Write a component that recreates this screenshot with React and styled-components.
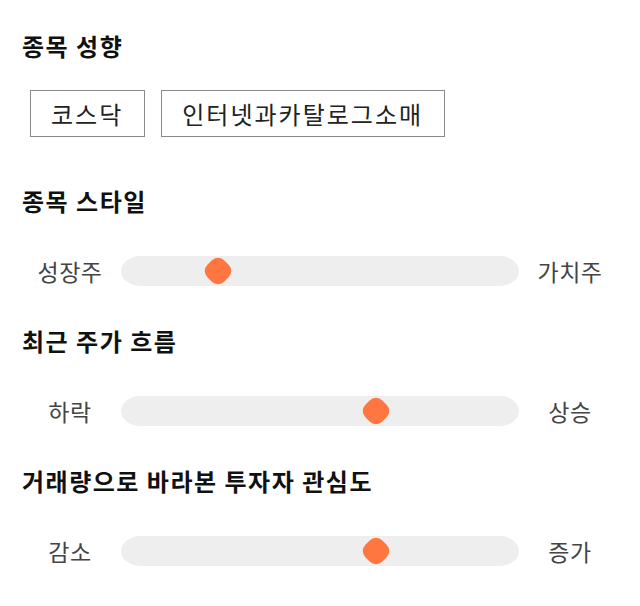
import React from 'react';
import styled, { createGlobalStyle } from 'styled-components';

const GlobalStyle = createGlobalStyle`
  body {
    margin: 0;
    background: #ffffff;
    font-family: "Noto Sans CJK KR", "Noto Sans", sans-serif;
  }
`;

const Page = styled.div`
  width: 640px;
  padding: 30px 22px 0;
  box-sizing: border-box;
  display: flex;
  flex-direction: column;
`;

const Section = styled.section`
  display: flex;
  flex-direction: column;
  gap: ${(p) => p.$gap}px;
  margin-bottom: ${(p) => p.$after}px;
`;

const Heading = styled.h2`
  margin: 0;
  font-size: 24px;
  letter-spacing: 1.5px;
  line-height: 32px;
  font-weight: 700;
  color: #111;
`;

const ChipRow = styled.div`
  display: flex;
  gap: 16px;
  padding-left: 8px;
`;

const Chip = styled.div`
  height: 47px;
  box-sizing: border-box;
  padding: 0 21px 0 20px;
  border: 1px solid #8a8a8a;
  display: flex;
  align-items: center;
  font-size: 24px;
  letter-spacing: 2px;
  color: #222;
`;

const SliderRow = styled.div`
  display: grid;
  grid-template-columns: 96px 1fr 96px;
  column-gap: 3px;
  align-items: center;
  height: 30px;
`;

const EndLabel = styled.span`
  text-align: center;
  font-size: 23px;
  letter-spacing: 0.5px;
  color: #444;
`;

const Track = styled.div`
  position: relative;
  height: 30px;
  background: #eeeeee;
  border-radius: 19px / 15px;
`;

// rounded diamond handle
const Thumb = styled.div`
  position: absolute;
  top: 50%;
  width: 24px;
  height: 24px;
  margin: -12px 0 0 -12px;
  background: #ff7640;
  border-radius: 9px;
  transform: rotate(45deg);
`;

const sliders = [
  { title: '종목 스타일', left: '성장주', right: '가치주', value: 24.4 },
  { title: '최근 주가 흐름', left: '하락', right: '상승', value: 64.1 },
  { title: '거래량으로 바라본 투자자 관심도', left: '감소', right: '증가', value: 64.1 },
];

export default function App() {
  return (
    <Page>
      <GlobalStyle />
      <Section $gap={28} $after={48}>
        <Heading>종목 성향</Heading>
        <ChipRow>
          <Chip>코스닥</Chip>
          <Chip>인터넷과카탈로그소매</Chip>
        </ChipRow>
      </Section>
      {sliders.map((s) => (
        <Section key={s.title} $gap={37} $after={41}>
          <Heading>{s.title}</Heading>
          <SliderRow>
            <EndLabel>{s.left}</EndLabel>
            <Track>
              <Thumb style={{ left: `${s.value}%` }} />
            </Track>
            <EndLabel>{s.right}</EndLabel>
          </SliderRow>
        </Section>
      ))}
    </Page>
  );
}
